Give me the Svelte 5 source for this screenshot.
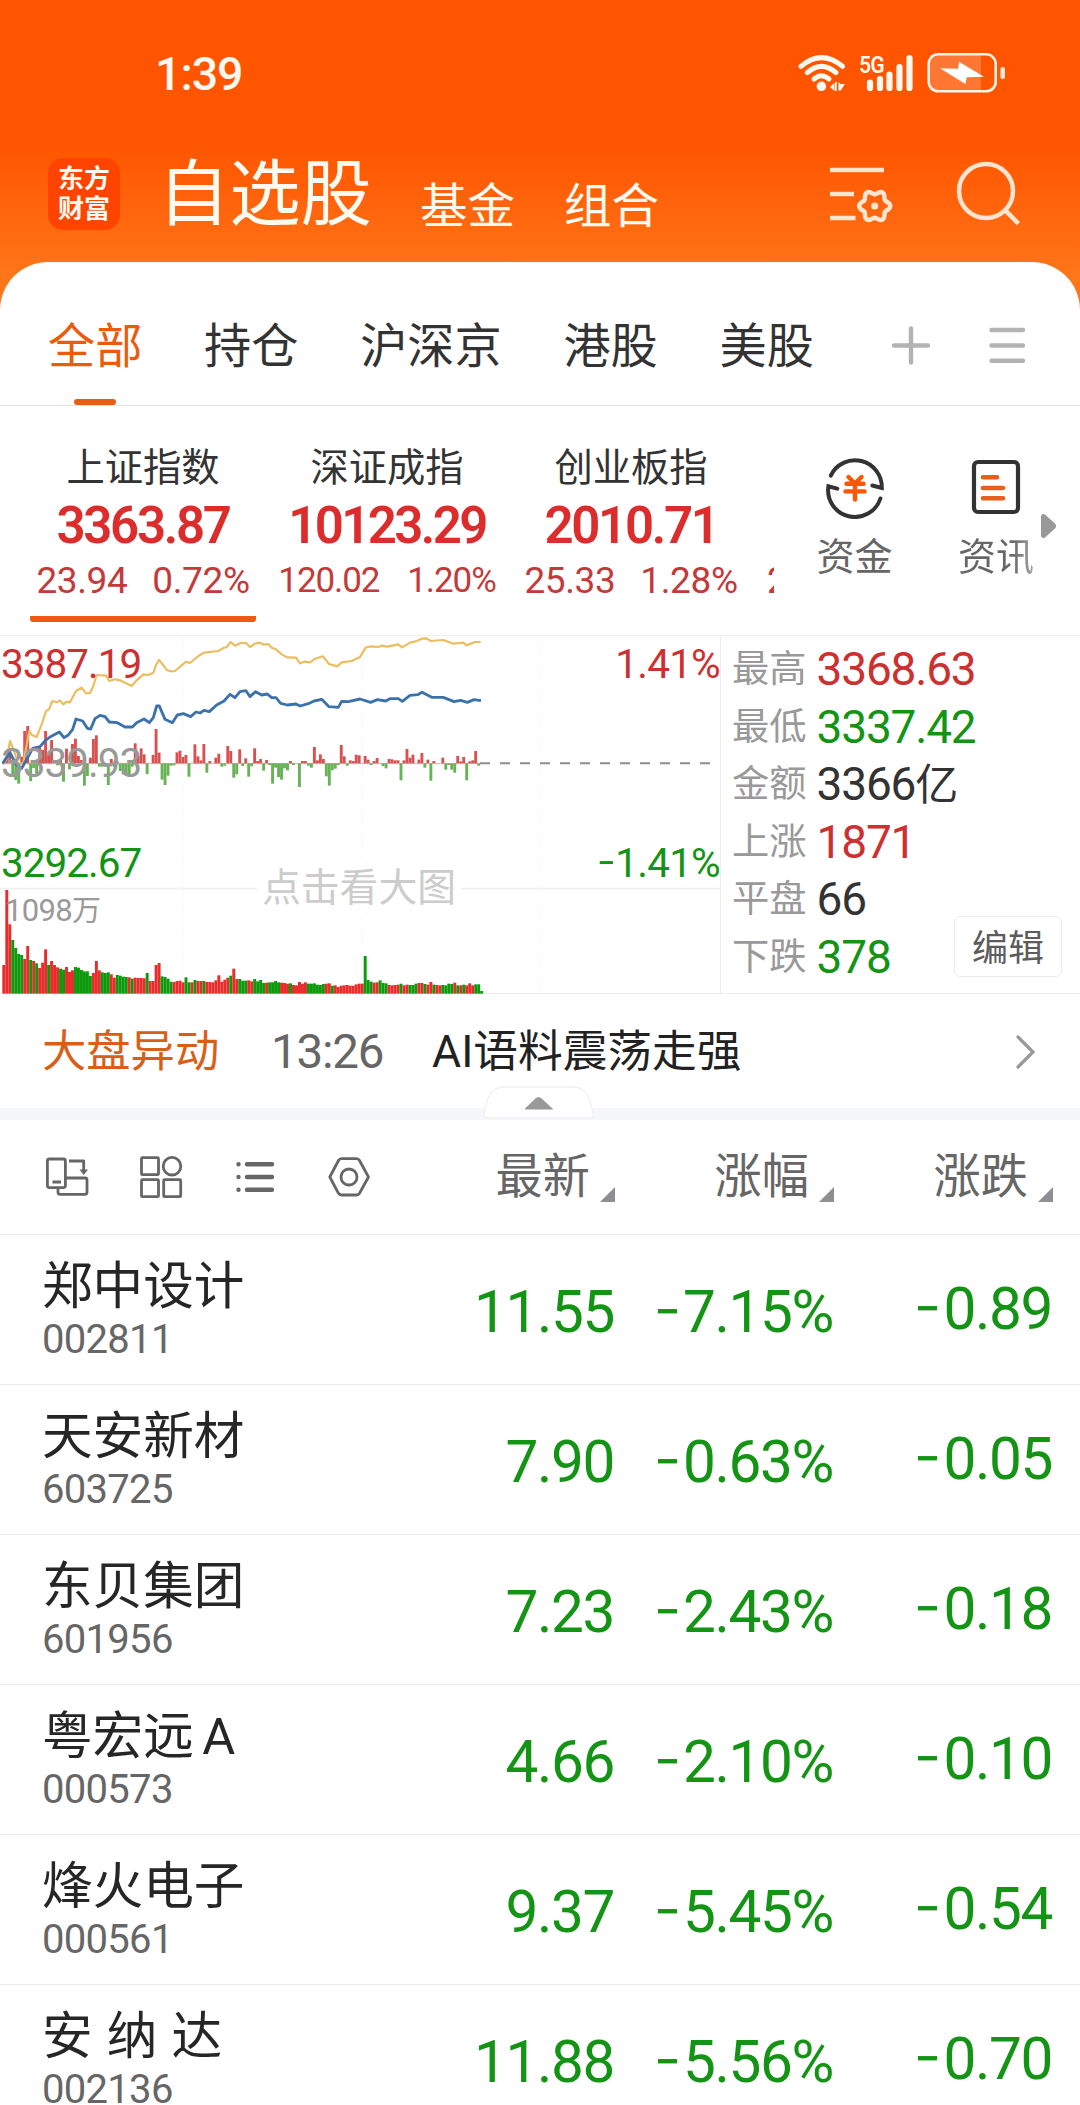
<script>
  const tabs = ['全部', '持仓', '沪深京', '港股', '美股'];

  const indices = [
    { name: '上证指数', value: '3363.87', diff: '23.94', pct: '0.72%', active: true },
    { name: '深证成指', value: '10123.29', diff: '120.02', pct: '1.20%', compact: true },
    { name: '创业板指', value: '2010.71', diff: '25.33', pct: '1.28%' },
  ];

  const stats = [
    { label: '最高', value: '3368.63', tone: 'up' },
    { label: '最低', value: '3337.42', tone: 'down' },
    { label: '金额', value: '3366', unit: '亿', tone: 'flat' },
    { label: '上涨', value: '1871', tone: 'up' },
    { label: '平盘', value: '66', tone: 'flat' },
    { label: '下跌', value: '378', tone: 'down' },
  ];

  const columns = ['最新', '涨幅', '涨跌'];

  const stocks = [
    { name: '郑中设计', code: '002811', price: '11.55', pct: '7.15%', diff: '0.89' },
    { name: '天安新材', code: '603725', price: '7.90', pct: '0.63%', diff: '0.05' },
    { name: '东贝集团', code: '601956', price: '7.23', pct: '2.43%', diff: '0.18' },
    { name: '粤宏远 A', code: '000573', price: '4.66', pct: '2.10%', diff: '0.10', tight: true },
    { name: '烽火电子', code: '000561', price: '9.37', pct: '5.45%', diff: '0.54' },
    { name: '安 纳 达', code: '002136', price: '11.88', pct: '5.56%', diff: '0.70' },
  ];

  // Chart units: three per pixel, one bar per trading minute.
  const STEP = 8.96;
  const barX = (i) => 7 + i * STEP;

  // Minute momentum, positive above the previous close, negative below.
  const momentum = [
    0, 20, 42, -33, -50, -61, 20, 97, 112, -53, -14, -38, 47, 40, 97, 32, 70, 6, -6, 12, -55, 44, -18, 58, 74, 22,
    10, -67, -38, 17, 73, 84, -10, -10, -10, -65, 13, -11, 5, -23, -33, -33, -33, -10, 60, 22, 45, 27, -32, 0, 25,
    103, 32, -49, -65, -37, -7, -6, 33, 38, 19, 25, -40, 0, 57, 21, 9, 58, -28, 7, 0, 17, 29, -10, -7, 52, 37, -43,
    -33, 42, -8, 15, -40, -9, 45, 7, 13, -22, 10, -5, -61, -13, -41, -49, -15, -21, 7, -5, 0, -71, 7, 7, -7, -13,
    49, 9, 27, 13, -39, -67, -21, -16, -5, 55, 21, -7, 9, 7, 26, 24, 0, 22, 11, -5, 7, 16, 0, -8, -15, 13, 12, 9, 9,
    -51, 9, 43, 17, 26, 0, 11, 31, -13, 11, -52, 7, 0, 0, 17, -19, -5, -19, -28, 22, 6, 19, -51, 6, 9, 37, -7, 0,
  ];

  const volume = [
    86, 311, 208, 161, 137, 119, 116, 104, 143, 101, 98, 91, 77, 93, 133, 86, 98, 86, 79, 75, 72, 80, 65, 70, 80,
    78, 71, 67, 67, 53, 62, 98, 70, 64, 62, 64, 58, 48, 56, 54, 51, 50, 49, 45, 48, 47, 47, 46, 62, 38, 38, 86, 92,
    52, 50, 45, 36, 35, 38, 39, 34, 49, 34, 34, 41, 38, 38, 38, 35, 35, 34, 40, 55, 36, 42, 48, 54, 75, 44, 44, 39,
    39, 40, 37, 44, 37, 41, 32, 33, 34, 34, 38, 34, 33, 32, 30, 31, 26, 25, 35, 30, 34, 30, 30, 31, 27, 26, 29, 30,
    31, 24, 25, 20, 24, 25, 26, 24, 24, 28, 30, 30, 113, 41, 36, 33, 34, 40, 32, 31, 26, 25, 26, 27, 30, 25, 27, 26,
    26, 30, 32, 32, 29, 27, 35, 27, 26, 25, 26, 25, 30, 29, 33, 25, 25, 27, 25, 31, 25, 28, 28, 8,
  ];
  // r: minute closed up, g: minute closed down
  const tones =
    'rrrggggrrgrgrrrgrrrggrrrgggggg' +
    'rrrgggrrggggrgrrrrgrrrrgggg' +
    'rrrrggrgrrgrrrrrrrrgrrgg' +
    'grrggggrggggrrrgrrrrrggggggrrgrrrr' +
    'rrrrrrgggrrgggrrrrgrrgggrrgrrgrrggggrgrgrrrggg';

  const average =
    '8,400 20,385 30,330 42,360 55,400 70,395 88,300 96,312 110,318 125,280 138,240 147,235 157,210 170,214 180,208 190,220 200,212 210,214 228,180 245,170 258,187 270,186 280,165 290,132 318,134 328,150 345,145 360,148 395,165 410,148 430,130 445,132 460,125 468,102 477,87 488,100 500,117 512,121 525,120 558,92 570,96 595,75 612,65 655,60 668,52 680,48 692,33 705,44 722,36 738,36 750,48 765,38 780,35 792,41 805,39 815,50 828,55 845,70 862,79 888,80 900,97 912,92 930,94 945,83 968,76 977,86 987,99 1012,106 1025,94 1055,90 1080,78 1097,50 1112,46 1135,48 1145,44 1162,47 1195,40 1206,49 1230,35 1250,30 1265,23 1280,22 1292,30 1330,27 1360,38 1390,35 1400,43 1425,33 1442,33';
  const price =
    '8,397 30,365 48,400 65,412 80,385 98,352 120,347 135,330 150,318 178,303 192,320 205,312 218,295 228,264 248,270 262,292 272,294 285,263 300,253 315,257 328,273 352,275 375,288 397,288 410,275 432,264 448,275 460,260 470,225 478,225 495,265 517,275 532,252 550,248 572,257 588,243 600,246 612,238 628,242 650,222 672,210 690,190 705,200 720,182 738,179 750,197 767,182 785,192 802,189 815,200 828,200 842,217 862,222 888,219 900,225 925,218 942,210 965,205 987,227 1015,229 1025,211 1045,212 1080,204 1112,214 1132,206 1157,210 1170,203 1195,203 1207,211 1230,193 1253,191 1266,184 1295,199 1330,199 1362,212 1382,208 1402,214 1422,206 1443,209';

  // Six-lobed gear outline.
  const gear =
    'M' +
    Array.from({ length: 72 }, (_, k) => {
      const a = (k * Math.PI) / 36;
      const r = 13.7 + 1.9 * Math.cos(6 * a);
      return `${(875.7 + r * Math.cos(a)).toFixed(2)} ${(206 + r * Math.sin(a)).toFixed(2)}`;
    }).join('L') +
    'Z';
</script>

<div class="screen">
  <header>
    <div class="status">
      <span class="clock">1:39</span>
      <div class="signals">
        <svg class="wifi" viewBox="798 50 50 44" width="50" height="44">
          <g fill="none" stroke="#fff8ee" stroke-width="5" stroke-linecap="round">
            <path d="M802 66.3Q822.4 49 843.5 66.3" />
            <path d="M808.3 72.6Q822.4 60 837 72.6" />
            <path d="M815 79Q822.4 72.5 830 79" />
          </g>
          <circle cx="822.4" cy="86.3" r="4.8" fill="#fff8ee" />
          <path d="M831 87l4.500-4v8zM836 82h1.800v9H836zM839.500 82l1.800 2h4.500l-4 6.500h-2.300z" fill="#fff8ee" />
        </svg>
        <div class="cell">
          <span class="gen">5G</span>
          <svg viewBox="858 50 58 44" width="58" height="44">
            <g stroke="#fff8ee" stroke-width="6.2" stroke-linecap="round">
              <path d="M871 82.500V88M881 79V88M890.500 74.500V88M900.500 67V88M910.500 58V88" />
            </g>
          </svg>
        </div>
        <svg viewBox="926 50 82 46" width="82" height="46">
          <rect x="931" y="55" width="51" height="35" fill="#fff" fill-opacity=".2" />
          <rect x="929.700" y="54.300" width="67" height="37" rx="9.500" fill="none" stroke="#fff4e6" stroke-width="2.600" />
          <path d="M941 68.300L959 68.700L960 61.700L985 76.700L967.700 77.300L966.300 84Z" fill="#fff" />
          <rect x="1001.500" y="67" width="4.400" height="12" rx="2" fill="#ffeedd" />
        </svg>
      </div>
    </div>
    <nav class="title">
      <div class="logo"><span>东方</span><span>财富</span></div>
      <h1>自选股</h1>
      <span class="alt">基金</span>
      <span class="alt">组合</span>
      <svg class="tools" viewBox="828 158 200 72" width="200" height="72" fill="none" stroke="#ffe5cf" stroke-width="4.500">
        <path d="M831 170H885M831 194H855M831 218H856.500" />
        <path d={gear} stroke-linejoin="round" />
        <circle cx="875.700" cy="206" r="3.600" fill="#ffe5cf" stroke="none" />
        <circle cx="987" cy="191" r="27" />
        <path d="M1005.600 209.700L1019.400 223.600" />
      </svg>
    </nav>
  </header>

  <main>
    <div class="tabs">
      {#each tabs as tab, i}
        <span class="tab" class:on={i === 0}>{tab}</span>
      {/each}
      <svg viewBox="890 322 140 48" width="140" height="48" stroke="#b3b3b3" stroke-width="4.400" stroke-linecap="round">
        <path d="M895 345.500H929M912 328.500V362.500M992.500 330H1024M992.500 345.500H1024M992.500 360.700H1024" />
      </svg>
    </div>

    <section class="indices">
      <div class="strip">
        {#each indices as item}
          <div class="index" class:on={item.active} class:compact={item.compact}>
            <span class="name">{item.name}</span>
            <span class="value">{item.value}</span>
            <span class="change"><span>{item.diff}</span><span>{item.pct}</span></span>
          </div>
        {/each}
        <div class="index next">
          <span class="change"><span>2</span></span>
        </div>
      </div>
      <div class="entry">
        <svg viewBox="824 455 64 64" width="64" height="64" fill="none" stroke-linecap="round">
          <g stroke="#333" stroke-width="4">
            <path d="M831.800 475.600A26.800 26.800 0 0 1 882.800 488L873.300 485.500" />
            <path d="M881.400 498.500A26.800 26.800 0 0 1 829.400 486.300L838.300 488.600" />
          </g>
          <path d="M849.500 477L856 483.500L862.500 477M847.500 483.700H864.500M846.500 491.400H865.500M856 484V499.500" stroke="#f50" stroke-width="4.400" />
        </svg>
        <span>资金</span>
      </div>
      <div class="entry">
        <svg viewBox="965 455 64 64" width="64" height="64" fill="none">
          <rect x="975" y="462" width="44" height="50" rx="4" stroke="#333" stroke-width="4.200" />
          <path d="M984 477.300H998M984 488H1004M984 498.300H1004" stroke="#e6601c" stroke-width="4.600" stroke-linecap="round" />
        </svg>
        <span class="fade">资讯</span>
      </div>
      <svg class="more" viewBox="0 0 16 26" width="16" height="26">
        <path d="M0 3Q1 0 4 1.500L14 10.500Q16 13 14 15.500L4 24.500Q1 26 0 23Z" fill="#999" />
      </svg>
    </section>

    <section class="market">
      <div class="chart">
        <svg viewBox="0 15 2163 1074" width="721" height="358">
          <g stroke="#ededed" stroke-width="3" stroke-dasharray="3 6">
            <path d="M548 17V1088M1086 17V1088M1623 17V1088" />
          </g>
          <path d="M0 773H2160" stroke="#f0f0f0" stroke-width="5" />
          {#each momentum as m, i}
            {#if m}
              <rect x={barX(i)} y={m > 0 ? 397 - m : 397} width="8.600" height={Math.abs(m)} fill={m > 0 ? '#d95050' : '#66b356'} />
            {/if}
          {/each}
          <path d="M6 398H1440" stroke="#b98a80" stroke-width="2" />
          <path d="M1440 397H2135" stroke="#8c8c8c" stroke-width="6" stroke-dasharray="30 30" />
          {#each volume as v, i}
            <rect x={barX(i)} y={1088 - v} width="8.800" height={v} fill={tones[i] === 'r' ? '#e82c2c' : '#0c9a0c'} />
          {/each}
          <polyline points={average} fill="none" stroke="#ecbd5e" stroke-width="6.500" stroke-linejoin="round" />
          <polyline points={price} fill="none" stroke="#3b72ac" stroke-width="8.500" stroke-linejoin="round" />
        </svg>
        <span class="tag top up">3387.19</span>
        <span class="tag mid">3339.93</span>
        <span class="tag low down">3292.67</span>
        <span class="tag top right up">1.41%</span>
        <span class="tag low right down"><i class="minus">−</i>1.41%</span>
        <span class="tag vol">1098<b>万</b></span>
        <span class="hint">点击看大图</span>
      </div>
      <div class="stats">
        {#each stats as s}
          <div class="stat">
            <span class="label">{s.label}</span>
            <span class="num {s.tone}">{s.value}{#if s.unit}<small>{s.unit}</small>{/if}</span>
          </div>
        {/each}
        <button>编辑</button>
      </div>
    </section>

    <section class="news">
      <span class="topic">大盘异动</span>
      <span class="time">13:26</span>
      <span class="headline">AI语料震荡走强</span>
      <svg viewBox="0 0 22 36" width="22" height="36" fill="none" stroke="#999" stroke-width="3.200" stroke-linecap="round">
        <path d="M3 3L18 18L3 33" />
      </svg>
    </section>

    <div class="band">
      <svg viewBox="482 1084 116 36" width="116" height="36">
        <path d="M484.500 1117.500L488 1101Q492 1087 506 1087H573Q587 1087 591 1101L595 1117.500Z" fill="#fff" stroke="#f1f1f3" stroke-width="1.500" />
        <path d="M526 1109L537 1098.500Q539.500 1096.500 542 1098.500L553.500 1109Z" fill="#999" stroke="#999" stroke-linejoin="round" />
      </svg>
    </div>

    <section class="toolbar">
      <svg viewBox="44 1152 330 50" width="330" height="50" fill="none" stroke="#666" stroke-width="2.800" stroke-linejoin="round">
        <rect x="48.400" y="1159" width="18" height="28.600" rx="2" />
        <path d="M53.500 1182H62M66.500 1178H86Q88 1178 88 1180V1192Q88 1194.300 86 1194.300H61Q59 1194.300 59 1192V1188M70 1161H84.700V1170" />
        <path d="M80.500 1169.500H89L84.700 1175Z" fill="#666" stroke="none" />
        <rect x="142.500" y="1157.700" width="17" height="17" rx="1" />
        <circle cx="173" cy="1166.200" r="8.800" />
        <rect x="142.500" y="1179.700" width="17" height="17" rx="1" />
        <rect x="164.700" y="1179.700" width="17" height="17" rx="1" />
        <path d="M248 1164.200H273M248 1177H273M248 1189.700H273M239.500 1164.100V1164.300M239.500 1176.900V1177.100M239.500 1189.600V1189.800" stroke-width="4.400" stroke-linecap="round" />
        <path d="M330.800 1177L339.500 1160.500Q340.500 1158.700 342.500 1158.700H357.500Q359.500 1158.700 360.500 1160.500L369.500 1177L360.500 1193.300Q359.500 1195 357.500 1195H342.500Q340.500 1195 339.500 1193.300Z" />
        <circle cx="350" cy="1177" r="8" />
      </svg>
      {#each columns as c}
        <span class="col">{c}<svg viewBox="0 0 15 15" width="15" height="15"><path d="M15 0V15H0Z" fill="#8e8e93" /></svg></span>
      {/each}
    </section>

    {#each stocks as s}
      <div class="row">
        <div class="who">
          <span class="stock" class:tight={s.tight}>{s.name}</span>
          <span class="code">{s.code}</span>
        </div>
        <span class="quote">{s.price}</span>
        <span class="quote"><i class="minus">−</i>{s.pct}</span>
        <span class="quote diff"><i class="minus">−</i>{s.diff}</span>
      </div>
    {/each}
  </main>
</div>

<style>
  :global(body) {
    background: #fff;
  }
  .screen {
    width: 1080px;
    height: 2105px;
    overflow: hidden;
    font-family: Roboto, 'Noto Sans CJK SC', sans-serif;
    color: #333;
    background: linear-gradient(#ff5500 0, #ff5500 145px, #ff7519 275px, #ff7519 330px, #fff 330px);
  }
  .screen * {
    box-sizing: border-box;
  }
  svg {
    display: block;
    flex: none;
  }
  header {
    height: 262px;
  }
  .status {
    display: flex;
    justify-content: space-between;
    height: 146px;
    padding: 51px 73px 0 155px;
  }
  .clock {
    font-size: 46.5px;
    line-height: 46px;
    font-weight: 500;
    letter-spacing: -1px;
    color: #fff8ee;
  }
  .signals {
    display: flex;
    gap: 10px;
    margin-top: -1px;
  }
  .cell {
    position: relative;
  }
  .gen {
    position: absolute;
    left: 2px;
    top: 2px;
    font-size: 24px;
    line-height: 26px;
    font-weight: 600;
    letter-spacing: -1px;
    color: #fff8ee;
    transform: scaleX(0.88);
    transform-origin: left;
  }
  .title {
    display: flex;
    align-items: flex-start;
    padding: 12px 53px 0 48px;
    color: #fffaf0;
  }
  .logo {
    display: flex;
    flex-direction: column;
    align-items: center;
    width: 72px;
    height: 72px;
    padding-top: 6px;
    border-radius: 15px;
    background: #ff4400;
    font-size: 26px;
    line-height: 30px;
    font-weight: 700;
  }
  h1 {
    margin: 1px 0 0 38px;
    font-size: 71.3px;
    line-height: 72px;
    font-weight: 400;
  }
  .alt {
    margin: 24px 0 0 48px;
    font-size: 47.5px;
    line-height: 50px;
  }
  .alt + .alt {
    margin-left: 49px;
  }
  .tools {
    margin-left: auto;
  }
  main {
    background: #fff;
    border-radius: 48px 48px 0 0;
  }
  .tabs {
    display: flex;
    align-items: center;
    gap: 61.7px;
    height: 144px;
    padding: 0 51px 0 48px;
    border-bottom: 1px solid #e2e2e2;
  }
  .tab {
    display: flex;
    flex-direction: column;
    height: 143px;
    padding-top: 27px;
    font-size: 47.2px;
    line-height: 117px;
  }
  .tab.on {
    color: #ea5c0c;
  }
  .tab.on::after {
    content: '';
    width: 42px;
    height: 6px;
    margin: -7px auto 0;
    border-radius: 3px;
    background: #ea5c14;
  }
  .tabs svg {
    margin: 24px 0 0 auto;
  }
  .indices {
    display: flex;
    height: 229px;
  }
  .strip {
    display: flex;
    gap: 18px;
    width: 774px;
    padding-left: 30px;
    overflow: hidden;
  }
  .index {
    display: flex;
    flex: none;
    flex-direction: column;
    align-items: center;
    width: 226px;
    height: 216px;
    padding-top: 37px;
  }
  .index.on {
    border-bottom: 6px solid transparent;
    background: linear-gradient(#ef5a10, #ef5a10) bottom / 100% 6px no-repeat border-box;
    border-radius: 3px;
  }
  .name {
    font-size: 38.3px;
    line-height: 50px;
  }
  .value {
    margin-top: 8px;
    padding-right: 0;
    font-size: 51px;
    line-height: 50px;
    font-weight: 600;
    letter-spacing: -2.3px;
    color: #dc2c2c;
  }
  .change {
    display: flex;
    gap: 25px;
    margin-top: 9.5px;
    font-size: 37px;
    line-height: 40px;
    letter-spacing: -0.4px;
    color: #c43a3a;
  }
  .compact .change {
    gap: 28px;
    font-size: 35px;
    letter-spacing: -1.1px;
  }
  .compact .value {
    letter-spacing: -2.6px;
  }
  .next .change {
    margin: 107.5px auto 0 5px;
    padding-top: 10px;
  }
  .entry {
    display: flex;
    flex-direction: column;
    align-items: center;
    width: 141px;
    margin-left: 10px;
    padding-top: 49px;
    font-size: 38px;
    line-height: 50px;
    color: #666;
  }
  .entry + .entry {
    margin-left: 0;
    width: 142px;
  }
  .entry span {
    margin-top: 13px;
  }
  .entry .fade {
    background: linear-gradient(90deg, #666 70%, #a5a5a5);
    background-clip: text;
    color: transparent;
  }
  .more {
    margin: 107px 0 0 -26px;
  }
  .market {
    display: flex;
    height: 359px;
    border-top: 1px solid #eee;
    border-bottom: 1px solid #ededed;
  }
  .chart {
    position: relative;
    width: 721px;
    border-right: 1px solid #eee;
  }
  .tag {
    position: absolute;
    left: 1px;
    font-size: 40.5px;
    line-height: 40px;
    letter-spacing: -1px;
    color: #999;
  }
  .tag.right {
    left: auto;
    right: 0;
    letter-spacing: -0.8px;
  }
  .top {
    top: 8px;
  }
  .mid {
    top: 107px;
  }
  .low {
    top: 207px;
  }
  .tag.vol {
    left: 5px;
    top: 255px;
    font-size: 31px;
    letter-spacing: -0.7px;
  }
  .vol b {
    font-size: 29px;
    font-weight: 400;
  }
  .hint {
    position: absolute;
    left: 257px;
    top: 225px;
    padding: 0 5px;
    background: #fff;
    font-size: 38.8px;
    line-height: 54px;
    color: #ccc;
  }
  .up {
    color: #cd3030;
  }
  .down {
    color: #149414;
  }
  .flat {
    color: #333;
  }
  .minus {
    display: inline-block;
    width: 0.46em;
    font-style: normal;
    transform: scaleX(0.8);
    transform-origin: left;
  }
  .stats {
    position: relative;
    flex: 1;
    padding: 5px 0 0 11px;
  }
  .stat {
    display: flex;
    align-items: center;
    gap: 10px;
    height: 57.5px;
  }
  .label {
    font-size: 37.3px;
    line-height: 50px;
    padding-bottom: 1px;
    color: #999;
  }
  .num {
    font-size: 46px;
    line-height: 57px;
    letter-spacing: -1.2px;
  }
  .num small {
    font-size: 43px;
  }
  button {
    position: absolute;
    right: 18px;
    bottom: 16px;
    width: 108px;
    height: 61px;
    padding: 0 0 4px;
    border: 1px solid #ebebeb;
    border-radius: 6px;
    background: #fff;
    font: 36px Roboto, 'Noto Sans CJK SC', sans-serif;
    color: #5c5c5c;
  }
  .news {
    display: flex;
    align-items: center;
    height: 114px;
    padding: 2px 43px 0 42px;
    font-size: 44.7px;
    line-height: 60px;
  }
  .topic {
    width: 229px;
    font-size: 44.3px;
    color: #d95f18;
  }
  .time {
    width: 161px;
    font-size: 47.5px;
    letter-spacing: -1.2px;
    color: #666;
  }
  .headline {
    color: #222;
  }
  .news svg {
    margin-left: auto;
  }
  .band {
    position: relative;
    height: 12px;
    background: #f5f7fa;
  }
  .band svg {
    position: absolute;
    left: 481px;
    bottom: 0;
  }
  .toolbar,
  .row {
    display: grid;
    grid-template-columns: 353px 219px 219px 219px;
    padding: 0 26px 0 43px;
    border-bottom: 1px solid #ececec;
  }
  .toolbar {
    align-items: center;
    height: 115px;
  }
  .row {
    height: 150px;
  }
  .col {
    display: flex;
    justify-content: flex-end;
    align-items: flex-end;
    gap: 10px;
    font-size: 47.2px;
    line-height: 50px;
    color: #666;
  }
  .col svg {
    margin-bottom: 0;
  }
  .who {
    display: flex;
    flex-direction: column;
    margin-left: -1px;
  }
  .stock {
    margin-top: 24px;
    font-size: 50.6px;
    line-height: 56px;
    word-spacing: 1.6px;
    color: #262626;
  }
  .stock.tight {
    word-spacing: -4px;
  }
  .code {
    margin-top: 4.5px;
    font-size: 40px;
    line-height: 40px;
    letter-spacing: -0.7px;
    color: #666;
  }
  .quote {
    padding: 47px 1px 0 0;
    text-align: right;
    white-space: nowrap;
    font-size: 58.5px;
    line-height: 60px;
    letter-spacing: -1.4px;
    color: #149414;
  }
  .quote .minus {
    width: 0.5em;
  }
  .quote.diff {
    padding-top: 44px;
  }
</style>
